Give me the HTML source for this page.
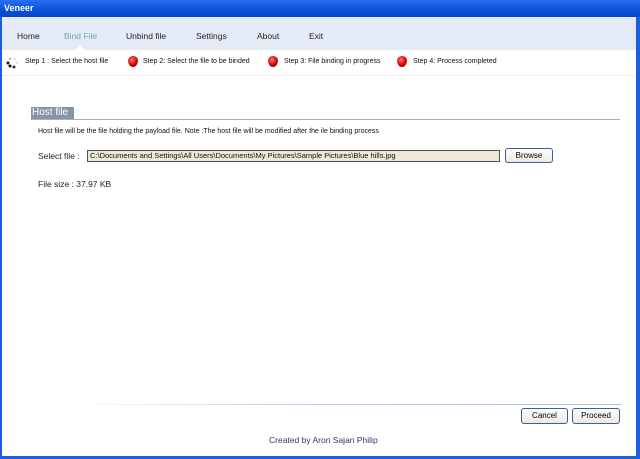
<!DOCTYPE html>
<html><head><style>
body{margin:0;width:640px;height:459px;overflow:hidden;background:#fff;font-family:Tahoma,"Liberation Sans",sans-serif;position:relative}
.a{position:absolute;white-space:nowrap}
#title{left:0;top:0;width:640px;height:17px;background:linear-gradient(#2a6ef0,#0a4fd6 60%,#0847c4);}
#lb{left:0;top:17px;width:2px;height:442px;background:#1a5fe0}
#rb{left:636px;top:17px;width:4px;height:442px;background:#1a5fe0}
#bb{left:0;top:456px;width:640px;height:3px;background:#1a5fe0}
#nav{left:2px;top:17px;width:634px;height:33px;background:#e4ebf6}
.n{top:31px;font-size:8.5px;color:#222}
.s{top:58px;font-size:7px;color:#111}
.dot{width:10px;height:11px;border-radius:50% 50% 50% 50%/40% 40% 60% 60%;background:radial-gradient(circle at 40% 35%,#f77,#c00 55%,#700);top:56px}
.btn{border:1px solid #3a5f9a;border-radius:3px;background:linear-gradient(#fff,#ece9e0);font-size:8px;text-align:center;box-sizing:border-box}
</style></head><body>
<div class="a" id="title"></div>
<div class="a" style="left:4px;top:3px;color:#fff;font-weight:bold;font-size:9px">Veneer</div>
<div class="a" id="nav"></div>
<div class="a n" style="left:17px">Home</div>
<div class="a n" style="left:64px;color:#6aa9b4">Bind File</div>
<div class="a" style="left:75px;top:46px;width:0;height:0;border-left:5px solid transparent;border-right:5px solid transparent;border-bottom:4px solid #fff"></div>
<div class="a n" style="left:126px">Unbind file</div>
<div class="a n" style="left:196px">Settings</div>
<div class="a n" style="left:257px">About</div>
<div class="a n" style="left:309px">Exit</div>
<div class="a" style="left:2px;top:75px;width:634px;height:1px;background:#f0efe4"></div>
<svg class="a" style="left:6px;top:57px" width="12" height="12"><circle cx="2" cy="6" r="1.5" fill="#111"/><circle cx="4" cy="9" r="1.5" fill="#111"/><circle cx="8" cy="10" r="1.5" fill="#333"/><circle cx="4" cy="2" r="1" fill="#999"/><circle cx="9" cy="2" r="0.8" fill="#bbb"/><circle cx="11" cy="6" r="0.8" fill="#bbb"/></svg>
<div class="a s" style="left:25px">Step 1 : Select the host file</div>
<div class="a dot" style="left:128px"></div>
<div class="a s" style="left:143px">Step 2: Select the file to be binded</div>
<div class="a dot" style="left:268px"></div>
<div class="a s" style="left:284px">Step 3: File binding in progress</div>
<div class="a dot" style="left:397px"></div>
<div class="a s" style="left:413px">Step 4: Process completed</div>
<div class="a" style="left:31px;top:107px;width:43px;height:12px;background:#8595a6"></div>
<div class="a" style="left:32px;top:107px;color:#fff;font-size:10px;line-height:12px">Host file</div>
<div class="a" style="left:31px;top:119px;width:589px;height:1px;background:#a9b0b8"></div>
<div class="a" style="left:38px;top:128px;font-size:7px;color:#111">Host file will be the file holding the payload file. Note :The host file will be modified after the ile binding process</div>
<div class="a" style="left:38px;top:151px;font-size:8.5px;color:#222">Select file :</div>
<div class="a" style="left:87px;top:150px;width:413px;height:12px;background:#ece9d8;border:1px solid #555;box-sizing:border-box;font-size:7.5px;line-height:10px;padding-left:2px;color:#111;overflow:hidden">C:\Documents and Settings\All Users\Documents\My Pictures\Sample Pictures\Blue hills.jpg</div>
<div class="a btn" style="left:505px;top:148px;width:48px;height:15px;line-height:13px">Browse</div>
<div class="a" style="left:38px;top:179px;font-size:8.5px;color:#222">File size : 37.97 KB</div>
<div class="a" style="left:97px;top:404px;width:524px;height:1px;background:linear-gradient(90deg,#f4f8ff,#b9cdf0 40%,#a8c0ec)"></div>
<div class="a btn" style="left:521px;top:408px;width:47px;height:16px;line-height:14px">Cancel</div>
<div class="a btn" style="left:572px;top:408px;width:48px;height:16px;line-height:14px">Proceed</div>
<div class="a" style="left:269px;top:435px;font-size:8.5px;color:#33336b">Created by Aron Sajan Philip</div>
<div class="a" id="lb"></div><div class="a" id="rb"></div><div class="a" id="bb"></div>
</body></html>
